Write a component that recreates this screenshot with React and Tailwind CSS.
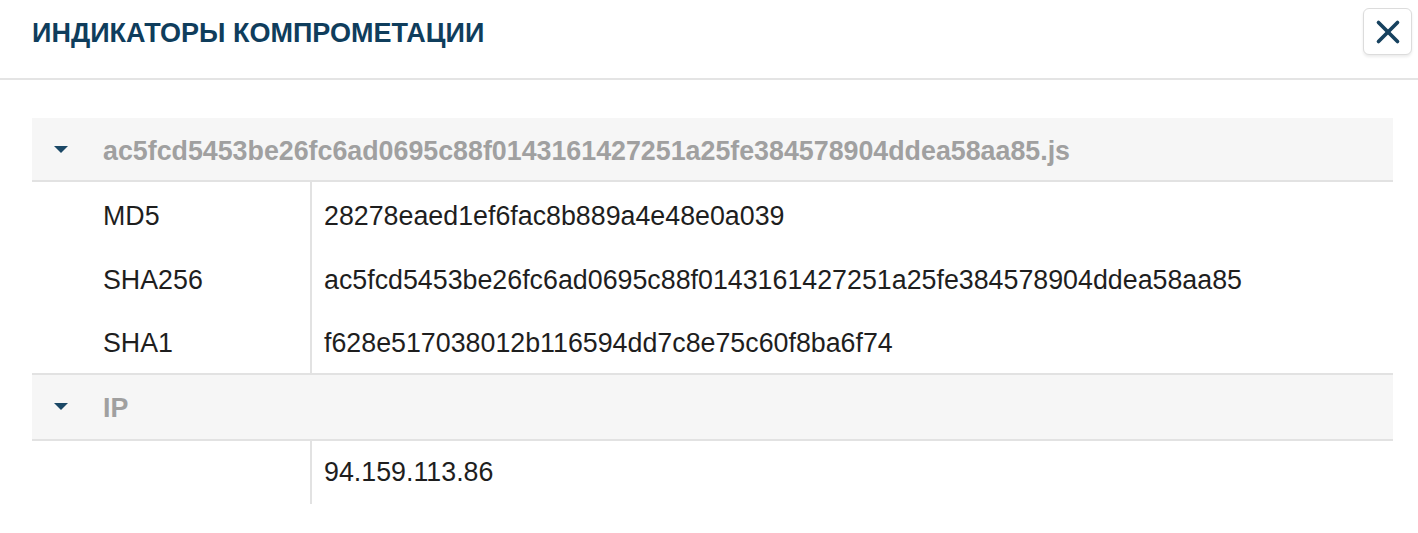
import { X } from "lucide-react";

const GROUPS = [
  {
    name: "ac5fcd5453be26fc6ad0695c88f0143161427251a25fe384578904ddea58aa85.js",
    rows: [
      ["MD5", "28278eaed1ef6fac8b889a4e48e0a039"],
      ["SHA256", "ac5fcd5453be26fc6ad0695c88f0143161427251a25fe384578904ddea58aa85"],
      ["SHA1", "f628e517038012b116594dd7c8e75c60f8ba6f74"],
    ],
  },
  {
    name: "IP",
    rows: [["", "94.159.113.86"]],
  },
];

function Caret() {
  return (
    <svg width="14" height="7" viewBox="0 0 14 7" className="shrink-0">
      <path d="M0 0h14L7 7z" fill="#1b4866" />
    </svg>
  );
}

export default function App() {
  return (
    <div className="w-[1418px] h-[533px] bg-white font-['Liberation_Sans',Arial,sans-serif] text-[#1e1e1e]">
      {/* Header */}
      <div className="flex items-start justify-between h-[80px] border-b-2 border-[#e4e4e4] pl-8 pr-[6px]">
        <h2 className="mt-[17px] text-[27px] leading-[32px] font-bold text-[#0f3d5c]">ИНДИКАТОРЫ КОМПРОМЕТАЦИИ</h2>
        <button className="mt-2 w-[49px] h-[47px] flex items-center justify-center rounded-md border border-[#dcdcdc] bg-white shadow-[0_2px_3px_rgba(0,0,0,0.08)]">
          <X size={38} strokeWidth={2.3} color="#17425f" />
        </button>
      </div>

      {/* Indicator table */}
      <div className="pt-[38px] pl-8 pr-[25px]">
        {GROUPS.map((g, gi) => (
          <div key={g.name}>
            <div className={`flex items-center h-[64px] bg-[#f6f6f6] border-b-2 border-[#e2e2e2] pl-[22px] gap-[35px] ${gi > 0 ? "border-t-2 box-content" : ""}`}>
              <Caret />
              <span className="pt-[4px] text-[26.8px] font-bold text-[#a0a0a0]">{g.name}</span>
            </div>
            {g.rows.map(([label, value], ri) => (
              <div key={ri} className={`flex text-[26.8px] ${gi === 0 ? "h-[63.5px]" : "h-[63px]"}`}>
                <div className={`w-[280px] shrink-0 flex items-center pl-[71px] border-r-2 border-[#e2e2e2] ${gi === 0 ? "pt-[5px]" : ""}`}>{label}</div>
                <div className={`flex items-center pl-3 ${gi === 0 ? "pt-[5px]" : ""}`}>{value}</div>
              </div>
            ))}
          </div>
        ))}
      </div>
    </div>
  );
}
